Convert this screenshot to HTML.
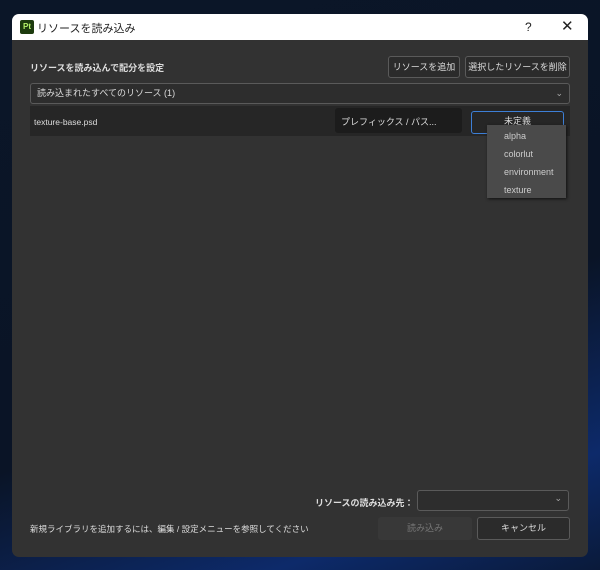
<!DOCTYPE html>
<html><head><meta charset="utf-8"><style>
*{box-sizing:border-box;margin:0;padding:0}
body{width:600px;height:570px;overflow:hidden;background:linear-gradient(160deg,#0b1628 0%,#0a1426 60%,#0d2a6a 85%,#0a1a3a 100%);font-family:"Liberation Sans","Noto Sans CJK JP",sans-serif;position:relative}
.win{position:absolute;left:12px;top:14px;width:576px;height:543px;background:#323232;border-radius:7px;overflow:hidden}
.tb{height:26px;background:#fff;position:relative;font-size:11px;color:#222}
.abs{position:absolute;white-space:nowrap}
.btn{position:absolute;border:1px solid #5a5a5a;border-radius:3px;background:#2b2b2b;color:#ddd;font-size:9px;text-align:center;white-space:nowrap;overflow:hidden}
.t{position:absolute;color:#ddd;font-size:9px;white-space:nowrap}
</style></head><body>
<div class="win">
 <div class="tb">
  <div class="abs" style="left:8px;top:6px;width:14px;height:14px;background:#1d3b0e;border-radius:2px;color:#b6f36a;font-size:8px;font-weight:bold;text-align:center;line-height:14px">Pt</div>
  <div class="abs" style="left:25px;top:6px">リソースを読み込み</div>
  <div class="abs" style="left:513px;top:6px;font-size:12px">?</div>
  <div class="abs" style="left:549px;top:3px;font-size:15px;font-weight:300">✕</div>
 </div>
 <div class="t" style="left:18px;top:47px;font-weight:bold">リソースを読み込んで配分を設定</div>
 <div class="btn" style="left:376px;top:42px;width:72px;height:22px;line-height:20px">リソースを追加</div>
 <div class="btn" style="left:453px;top:42px;width:105px;height:22px;line-height:20px">選択したリソースを削除</div>
 <div class="btn" style="left:18px;top:69px;width:540px;height:21px;line-height:19px;text-align:left;padding-left:6px;background:#2d2d2d">読み込まれたすべてのリソース (1)<span style="position:absolute;right:6px;top:0;color:#aaa">⌄</span></div>
 <div class="abs" style="left:18px;top:92px;width:540px;height:30px;background:#262626"></div>
 <div class="t" style="left:22px;top:103px;font-size:8.5px">texture-base.psd</div>
 <div class="abs" style="left:323px;top:94px;width:127px;height:25px;background:#1c1c1c;border-radius:3px;color:#ddd;font-size:9px;padding:7px 6px">プレフィックス / パス...</div>
 <div class="abs" style="left:459px;top:97px;width:93px;height:23px;border:1.5px solid #3d7fd6;border-radius:3px;color:#ddd;font-size:9px;text-align:center;line-height:18px">未定義</div>
 <div class="abs" style="left:475px;top:111px;width:79px;height:73px;background:#4a4a4a;box-shadow:1px 1px 3px #111;color:#ccc;font-size:9px;padding:2px 0 0 17px;line-height:18px">alpha<br>colorlut<br>environment<br>texture</div>
 <div class="t" style="left:303px;top:482px;font-weight:bold">リソースの読み込み先：</div>
 <div class="btn" style="left:405px;top:476px;width:152px;height:21px;background:#2d2d2d"><span style="position:absolute;right:6px;top:2px;color:#aaa">⌄</span></div>
 <div class="t" style="left:18px;top:509px;font-size:8.5px">新規ライブラリを追加するには、編集 / 設定メニューを参照してください</div>
 <div class="abs" style="left:366px;top:503px;width:94px;height:23px;background:#383838;border-radius:3px;color:#777;font-size:9px;text-align:center;line-height:23px">読み込み</div>
 <div class="btn" style="left:465px;top:503px;width:93px;height:23px;line-height:21px">キャンセル</div>
</div>
</body></html>
